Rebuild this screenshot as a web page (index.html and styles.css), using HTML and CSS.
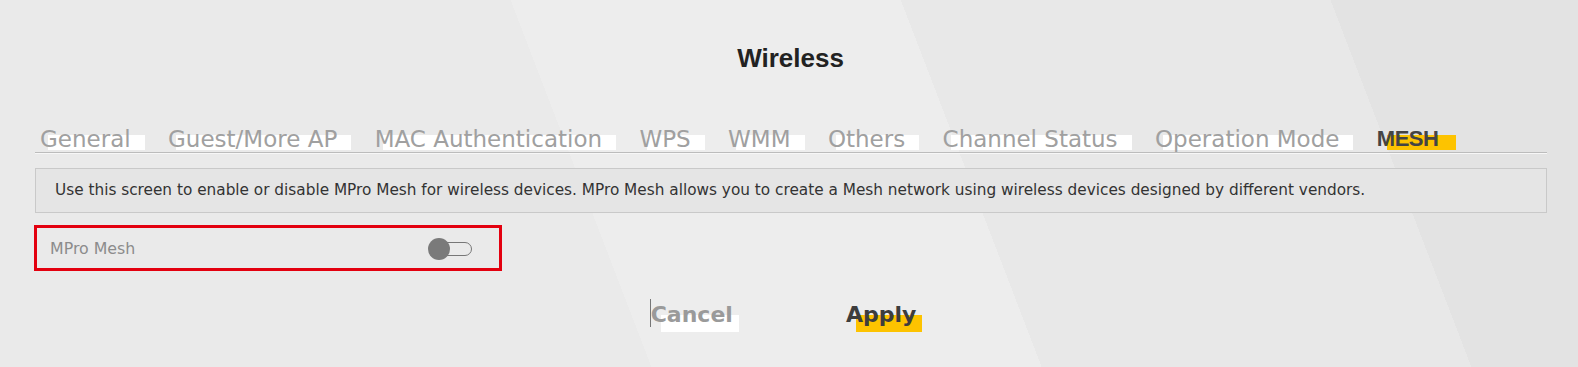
FILE: index.html
```html
<!DOCTYPE html>
<html lang="en">
<head>
  <meta charset="UTF-8">
  <title>Wireless</title>
  <link rel="stylesheet" href="styles.css">
</head>
<body>

<div class="page">
  <h1 class="title">Wireless</h1>

  <ul class="tabs">
    <li class="tab">General</li>
    <li class="tab">Guest/More AP</li>
    <li class="tab">MAC Authentication</li>
    <li class="tab">WPS</li>
    <li class="tab">WMM</li>
    <li class="tab">Others</li>
    <li class="tab">Channel Status</li>
    <li class="tab">Operation Mode</li>
    <li class="tab active">MESH</li>
  </ul>

  <p class="note">Use this screen to enable or disable MPro Mesh for wireless devices. MPro Mesh allows you to create a Mesh network using wireless devices designed by different vendors.</p>

  <div class="field">
    <span class="field-label">MPro Mesh</span>
    <span class="switch">
      <span class="switch-track"></span>
      <span class="switch-knob"></span>
    </span>
  </div>

  <div class="actions">
    <button class="btn btn-cancel">Cancel</button>
    <button class="btn btn-apply">Apply</button>
  </div>
</div>

</body>
</html>
```

FILE: styles.css
```css
html, body {
  height: 100%;
}
body {
  margin: 0;
  overflow: hidden;
  font-family: "DejaVu Sans", sans-serif;
  color: #333;
  background: linear-gradient(69deg, #eaeaea 37.9%, #ededed 37.9%, #ededed 60.6%, #e8e8e8 60.6%, #e8e8e8 85.6%, #e3e3e3 85.6%);
}
.page {
  padding: 42px 31px 0 34px;
}
.title {
  margin: 0;
  text-align: center;
  font: bold 26px/32px "Liberation Sans", sans-serif;
  color: #222;
}
.tabs {
  list-style: none;
  margin: 52px 0 0 1px;
  padding: 0 0 0 5px;
  display: flex;
  gap: 37.4px;
  border-bottom: 1px solid #bcbcbc;
  box-shadow: 0 1px 0 #f7f7f7;
}
.tab {
  position: relative;
  z-index: 0;
  font-size: 23px;
  line-height: 26px;
  color: #a0a0a0;
  cursor: pointer;
}
.tab::before {
  content: "";
  position: absolute;
  z-index: -1;
  left: 8px;
  right: -14px;
  top: 9px;
  bottom: 2px;
  background: #fff;
}
.tab.active {
  font: bold 22px/26px "Liberation Sans", sans-serif;
  letter-spacing: -0.5px;
  color: #444;
}
.tab.active::before {
  left: 10px;
  right: -18px;
  background: #fdc300;
}
.note {
  margin: 15px 0 0 1px;
  padding: 0 19px;
  line-height: 43px;
  border: 1px solid #c9c9c9;
  background: #e5e5e5;
  font-size: 15.3px;
  color: #333;
}
.field {
  width: 468px;
  height: 46px;
  box-sizing: border-box;
  margin-top: 12px;
  padding: 0 27px 0 13px;
  border: 3px solid #e3000f;
  display: flex;
  align-items: center;
  justify-content: space-between;
}
.field-label {
  font-size: 15.8px;
  color: #8c8c8c;
}
.switch {
  position: relative;
  width: 44px;
  height: 22px;
  margin-top: 2px;
}
.switch-track {
  position: absolute;
  left: 4px;
  right: 0;
  top: 4px;
  height: 14px;
  box-sizing: border-box;
  border: 1px solid #777;
  border-radius: 7px;
}
.switch-knob {
  position: absolute;
  left: 0;
  top: 0;
  width: 22px;
  height: 22px;
  border-radius: 50%;
  background: #7a7a7a;
}
.actions {
  display: flex;
  justify-content: center;
  gap: 113px;
  margin-top: 31px;
  padding-right: 14px;
}
.btn {
  position: relative;
  z-index: 0;
  border: 0;
  background: none;
  padding: 0 0 4px;
  font: bold 22px/26px "DejaVu Sans", sans-serif;
  color: #9a9a9a;
  cursor: pointer;
}
.btn::before {
  content: "";
  position: absolute;
  z-index: -1;
  left: 10px;
  right: -6px;
  top: 13px;
  bottom: 0;
  background: #fff;
}
.btn-cancel::after {
  content: "";
  position: absolute;
  left: -1px;
  top: -3px;
  width: 1px;
  height: 28px;
  background: #777;
}
.btn-apply {
  color: #3d3d3d;
}
.btn-apply::before {
  background: #fdc300;
}
```
